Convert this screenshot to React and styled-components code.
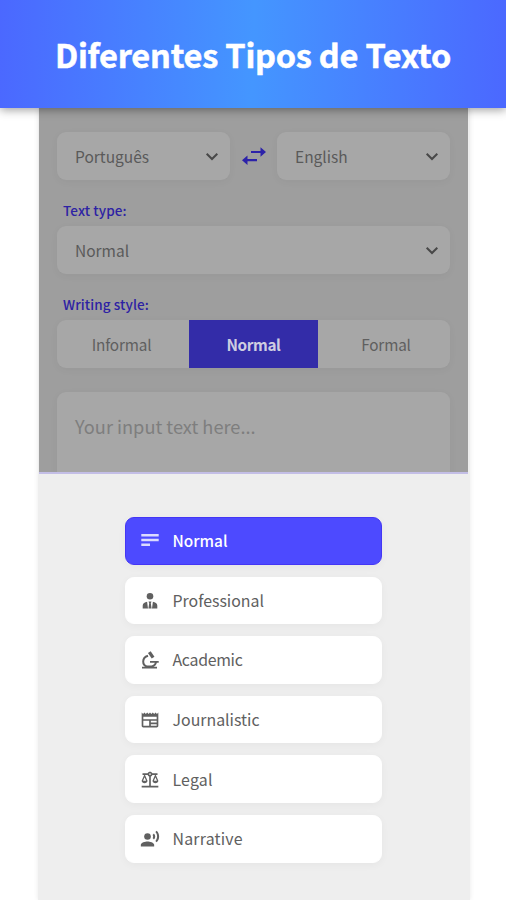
import React from "react";
import styled, { createGlobalStyle } from "styled-components";
import { MdBalance, MdNewspaper, MdRecordVoiceOver } from "react-icons/md";

const GlobalStyle = createGlobalStyle`
    * {
        box-sizing: border-box;
    }
    body {
        margin: 0;
        background: #fff;
        font-family: "Noto Sans CJK JP", "Noto Sans", sans-serif;
    }
`;

const NotesIcon = () => (
    <svg width="20" height="20" viewBox="0 0 20 20" fill="currentColor">
        <path d="M1.3 4h17.4v2.4H1.3zM1.3 8.8h17.4v2.4H1.3zM1.3 13.6h8.7v2.4H1.3z" />
    </svg>
);

const ProfessionalIcon = () => (
    <svg width="20" height="20" viewBox="0 0 20 20" fill="currentColor">
        <circle cx="10" cy="5.3" r="3.3" />
        <path d="M2.7 17.6v-3.2c0-2 2.2-3.2 4.4-3.6L8 17.6zM17.3 17.6v-3.2c0-2-2.2-3.2-4.4-3.6L12 17.6zM8.5 10.5h3l-.7 1.7.8 5.4H8.4l.8-5.4z" />
    </svg>
);

const MicroscopeIcon = () => (
    <svg width="20" height="20" viewBox="0 0 20 20" fill="none" stroke="currentColor" strokeWidth="2">
        <path d="M9.3 2.1l3.8 5.5" strokeWidth="3.3" />
        <path d="M8 5.8C4.7 6.9 3.2 9.3 3.2 11.5c0 2.5 1.5 4.3 3.5 5h5c2.4-.6 4-2.4 4.3-4.7" />
        <path d="M10 11.8h8.7M2 17.7h15" strokeWidth="1.7" />
    </svg>
);

const SwapIcon = () => (
    <svg width="26" height="22" viewBox="0 0 26 22" fill="none" stroke="currentColor" strokeWidth="2.2">
        <path d="M10 7h11M16 15.2H5" />
        <path d="M19.5 2.3L25 7l-5.5 4.7zM6.5 10.5L1 15.2l5.5 4.7z" fill="currentColor" stroke="none" />
    </svg>
);

const Chevron = () => (
    <svg width="14" height="10" viewBox="0 0 14 10" fill="none" stroke="#484848" strokeWidth="2">
        <path d="M1.7 2.7L7 8l5.3-5.3" />
    </svg>
);

const types = [
    { name: "Normal", icon: <NotesIcon /> },
    { name: "Professional", icon: <ProfessionalIcon /> },
    { name: "Academic", icon: <MicroscopeIcon />, spacing: "-0.3px" },
    { name: "Journalistic", icon: <MdNewspaper /> },
    { name: "Legal", icon: <MdBalance />, spacing: "0.2px" },
    { name: "Narrative", icon: <MdRecordVoiceOver />, spacing: "0.2px" },
];

const Select = ({ children }) => (
    <StyledSelect>
        <span>{children}</span>
        <Chevron />
    </StyledSelect>
);

const App = () => {
    return (
        <>
            <GlobalStyle />
            <Page>
                <Header>
                    <h1>Diferentes Tipos de Texto</h1>
                </Header>
                <Phone>
                    <Screen>
                        <LanguageRow>
                            <Select>Português</Select>
                            <SwapIcon />
                            <Select>English</Select>
                        </LanguageRow>
                        <Label>Text type:</Label>
                        <Select>Normal</Select>
                        <Label>Writing style:</Label>
                        <Segments>
                            <Segment>Informal</Segment>
                            <Segment $active>Normal</Segment>
                            <Segment>Formal</Segment>
                        </Segments>
                        <TextBox>Your input text here...</TextBox>
                    </Screen>
                    <Sheet>
                        {types.map(({ name, icon, spacing }, i) => (
                            <Option key={name} $active={i === 0} $spacing={spacing}>
                                {icon}
                                <span>{name}</span>
                            </Option>
                        ))}
                    </Sheet>
                </Phone>
            </Page>
        </>
    );
};

const Page = styled.div`
    display: flex;
    flex-direction: column;
    width: 506px;
    height: 900px;
    overflow: hidden;
`;

const Header = styled.header`
    position: relative;
    z-index: 1;
    flex: none;
    display: flex;
    justify-content: center;
    height: 108px;
    padding-top: 31px;
    background: linear-gradient(92deg, #4b68ff 0%, #4496ff 50%, #4b68ff 100%);
    box-shadow: 0 2px 9px rgba(0, 0, 0, 0.38);
    h1 {
        margin: 0;
        color: #fff;
        font-size: 32.5px;
        font-weight: 700;
        letter-spacing: -0.2px;
        line-height: 46px;
        white-space: nowrap;
        -webkit-text-stroke: 0.5px #fff;
    }
`;

const Phone = styled.main`
    flex: 1;
    display: flex;
    flex-direction: column;
    width: 432px;
    margin-left: 38px;
    background: #eee;
    box-shadow: 0 0 5px rgba(0, 0, 0, 0.09);
`;

const Screen = styled.section`
    height: 366px;
    width: 429px;
    margin-left: 1px;
    padding: 24px 18px 0;
    overflow: hidden;
    background: #9e9e9e;
    border-bottom: 2px solid #c3bee6;
`;

const LanguageRow = styled.div`
    display: grid;
    grid-template-columns: 173px 26px 173px;
    justify-content: space-between;
    align-items: center;
    color: #2c22a9;
`;

const StyledSelect = styled.div`
    display: flex;
    align-items: center;
    justify-content: space-between;
    height: 47.5px;
    padding: 0 11px 0 18px;
    border-radius: 9px;
    background: #a7a7a7;
    box-shadow: 0 2px 8px rgba(0, 0, 0, 0.04);
    color: #5a5a5a;
    font-size: 15.5px;
    line-height: 24px;
`;

const Label = styled.div`
    height: 46.7px;
    padding: 19.4px 6px 0;
    color: #2d22a4;
    font-size: 13.5px;
    font-weight: 500;
    letter-spacing: 0.1px;
    line-height: 22px;
`;

const Segments = styled.div`
    display: grid;
    grid-template-columns: 132px 129px 132px;
    height: 47.5px;
    overflow: hidden;
    border-radius: 9px;
    background: #a7a7a7;
    box-shadow: 0 2px 8px rgba(0, 0, 0, 0.04);
`;

const Segment = styled.div`
    display: flex;
    align-items: center;
    justify-content: center;
    background: ${({ $active }) => ($active ? "#332ca8" : "transparent")};
    color: ${({ $active }) => ($active ? "#cecde1" : "#5f5f5f")};
    font-size: 15.3px;
    font-weight: ${({ $active }) => ($active ? 700 : 400)};
    letter-spacing: ${({ $active }) => ($active ? "-0.4px" : "-0.15px")};
    line-height: 24px;
    padding-bottom: 1px;
    &:first-child {
        padding-right: 3px;
    }
    &:last-child {
        padding-left: 4px;
    }
`;

const TextBox = styled.div`
    height: 100px;
    margin-top: 24px;
    padding: 20.5px 18px;
    border-radius: 9px;
    background: #a7a7a7;
    box-shadow: 0 2px 8px rgba(0, 0, 0, 0.04);
    color: #7e7e7e;
    font-size: 18.2px;
    line-height: 28px;
`;

const Sheet = styled.section`
    display: flex;
    flex-direction: column;
    gap: 12px;
    padding: 43px 88px 0 87px;
`;

const Option = styled.div`
    display: flex;
    align-items: center;
    gap: 13px;
    height: 47.6px;
    padding: ${({ $active }) => ($active ? "0 0 1px 13.5px" : "1px 0 0 13.5px")};
    border-radius: 9px;
    border: 1px solid ${({ $active }) => ($active ? "#4436f5" : "#fff")};
    background: ${({ $active }) => ($active ? "#4d4aff" : "#fff")};
    box-shadow: 0 2px 8px rgba(0, 0, 0, 0.04);
    color: ${({ $active }) => ($active ? "#fff" : "#606060")};
    font-size: ${({ $active }) => ($active ? "15.4px" : "15.9px")};
    font-weight: ${({ $active }) => ($active ? 500 : 400)};
    letter-spacing: ${({ $spacing }) => $spacing || 0};
    line-height: 24px;
    svg {
        flex: none;
        width: 20px;
        height: 20px;
        opacity: ${({ $active }) => ($active ? 0.8 : 1)};
    }
`;

export default App;
